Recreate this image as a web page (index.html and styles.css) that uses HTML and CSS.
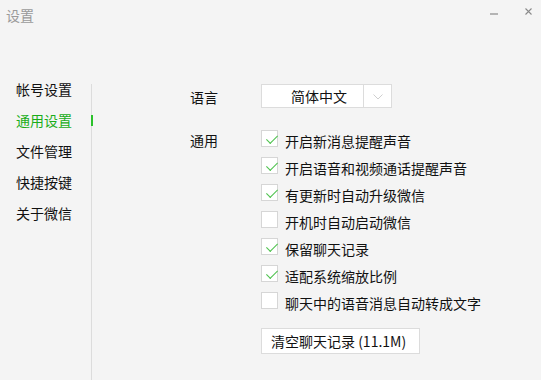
FILE: index.html
```html
<!DOCTYPE html>
<html lang="zh-CN">
<head>
    <meta charset="UTF-8">
    <title>设置</title>
    <link rel="stylesheet" href="styles.css">
</head>
<body>
    <div class="window">
        <header class="titlebar">
            <span class="title">设置</span>
            <div class="controls">
                <span class="btn-min"></span>
                <svg class="btn-close" width="7" height="7" viewBox="0 0 7 7">
                    <path d="M0.5 0.5 L6.5 6.5 M6.5 0.5 L0.5 6.5" stroke="#8a8a8a" stroke-width="1.1" fill="none"/>
                </svg>
            </div>
        </header>

        <div class="panel">
            <nav class="sidebar">
                <ul class="nav">
                    <li class="nav-item">帐号设置</li>
                    <li class="nav-item active">通用设置</li>
                    <li class="nav-item">文件管理</li>
                    <li class="nav-item">快捷按键</li>
                    <li class="nav-item">关于微信</li>
                </ul>
            </nav>

            <main class="content">
                <div class="row row-lang">
                    <span class="label">语言</span>
                    <div class="select">
                        <span class="select-value">简体中文</span>
                        <span class="select-arrow">
                            <svg width="10" height="6" viewBox="0 0 10 6">
                                <polyline points="0.5,0.5 5,5 9.5,0.5" stroke="#cfcfcf" stroke-width="1" fill="none"/>
                            </svg>
                        </span>
                    </div>
                </div>

                <div class="row row-general">
                    <span class="label label-general">通用</span>
                    <div class="general">
                        <ul class="options">
                            <li class="option"><span class="check on"></span><span class="option-text">开启新消息提醒声音</span></li>
                            <li class="option"><span class="check on"></span><span class="option-text">开启语音和视频通话提醒声音</span></li>
                            <li class="option"><span class="check on"></span><span class="option-text">有更新时自动升级微信</span></li>
                            <li class="option"><span class="check"></span><span class="option-text">开机时自动启动微信</span></li>
                            <li class="option"><span class="check on"></span><span class="option-text">保留聊天记录</span></li>
                            <li class="option"><span class="check on"></span><span class="option-text">适配系统缩放比例</span></li>
                            <li class="option"><span class="check"></span><span class="option-text">聊天中的语音消息自动转成文字</span></li>
                        </ul>
                        <button class="clear-btn">清空聊天记录 (11.1M)</button>
                    </div>
                </div>
            </main>
        </div>
    </div>
</body>
</html>
```

FILE: styles.css
```css
* {
    box-sizing: border-box;
}
body {
    margin: 0;
    padding: 0;
    background: #f4f4f4;
    font-family: "Noto Sans CJK SC", "Liberation Sans", sans-serif;
    font-size: 14px;
    color: #111;
    overflow: hidden;
}
.window {
    display: flex;
    flex-direction: column;
    height: 100vh;
}
.titlebar {
    display: flex;
    justify-content: space-between;
    align-items: flex-start;
    height: 30px;
    padding: 5px 0 0 6px;
}
.title {
    color: #9a9a9a;
    font-size: 14px;
    line-height: 20px;
}
.controls {
    display: flex;
    align-items: flex-start;
    padding-top: 3px;
}
.btn-min {
    width: 8px;
    height: 2px;
    margin-top: 5px;
    margin-right: 27px;
    background: #b4b4b4;
}
.btn-close {
    display: block;
    margin-right: 9px;
}

.panel {
    display: flex;
    flex: 1;
    margin-top: 54px;
}
.sidebar {
    width: 92px;
    border-right: 1px solid #dcdcdc;
}
.nav {
    list-style: none;
    margin: -10px 0 0 0;
    padding: 0;
}
.nav-item {
    position: relative;
    padding-left: 16px;
    line-height: 31px;
    height: 31px;
}
.nav-item.active {
    color: #1aad19;
}
.nav-item.active::after {
    content: "";
    position: absolute;
    right: -2px;
    top: 10px;
    width: 2px;
    height: 11px;
    background: #2bc12b;
}

.content {
    flex: 1;
    padding-left: 98px;
}
.row {
    display: flex;
    align-items: flex-start;
}
.label {
    width: 71px;
    height: 24px;
    line-height: 24px;
    padding-top: 1px;
}
.select {
    display: flex;
    width: 131px;
    height: 24px;
    background: #fff;
    border: 1px solid #dcdcdc;
}
.select-value {
    width: 101px;
    padding-left: 29px;
    line-height: 22px;
}
.select-arrow {
    flex: 1;
    display: flex;
    justify-content: center;
    align-items: center;
    border-left: 1px solid #dcdcdc;
}
.select-arrow svg {
    display: block;
    margin-top: 1px;
}

.row-general {
    margin-top: 17px;
}
.label-general {
    line-height: 20px;
    padding-top: 5px;
}
.options {
    list-style: none;
    margin: 0;
    padding: 0;
}
.option {
    display: flex;
    align-items: flex-start;
    height: 27px;
}
.check {
    position: relative;
    width: 17px;
    height: 17px;
    margin-top: 5px;
    background: #fff;
    border: 1px solid #d6d6d6;
}
.check.on::after {
    content: "";
    position: absolute;
    left: 4px;
    top: 1px;
    width: 9px;
    height: 5px;
    border-left: 1.5px solid #4cc24c;
    border-bottom: 1.5px solid #4cc24c;
    transform: translate(1px, 3px) rotate(-45deg) scaleX(1.1);
}
.option-text {
    margin-left: 7px;
    line-height: 20px;
    padding-top: 6px;
}
.clear-btn {
    display: block;
    margin-top: 14px;
    width: 159px;
    height: 26px;
    padding: 0 0 0 9px;
    text-align: left;
    background: #fff;
    border: 1px solid #dcdcdc;
    font-family: inherit;
    font-size: 14px;
    color: #111;
}
```
